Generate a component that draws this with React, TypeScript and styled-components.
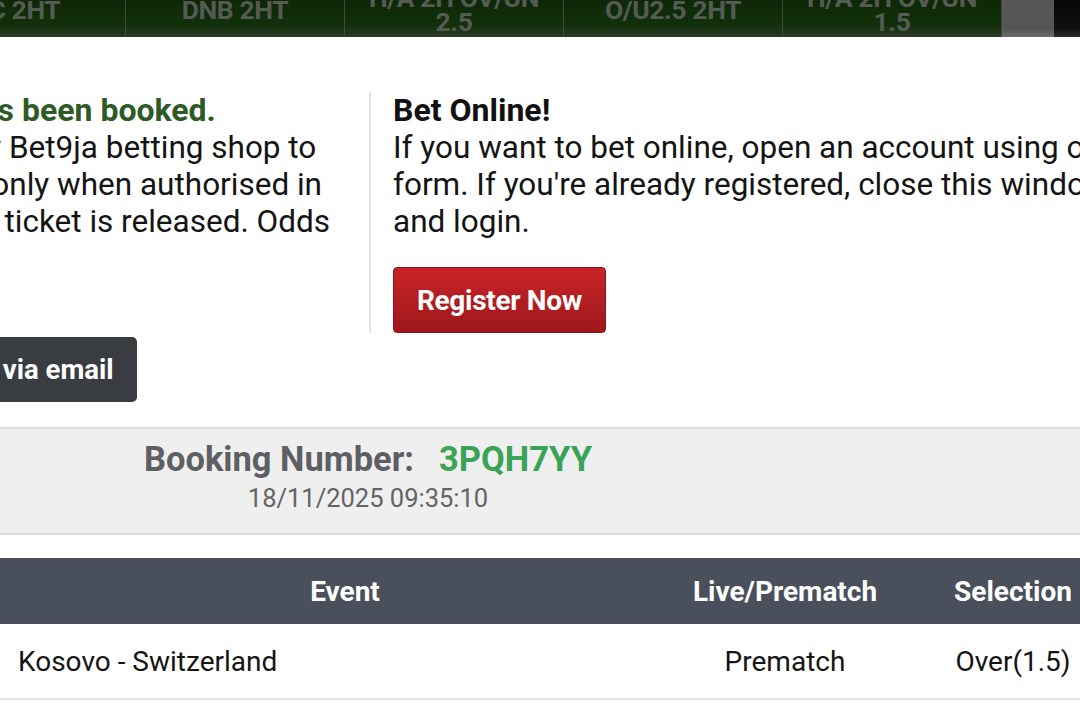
import React from 'react';
import styled, { createGlobalStyle } from 'styled-components';

const GlobalStyle = createGlobalStyle`
  html, body {
    margin: 0;
    padding: 0;
    background: #ffffff;
    font-family: Roboto, 'Liberation Sans', sans-serif;
  }
`;

const Page = styled.div`
  width: 1080px;
  height: 721px;
  overflow: hidden;
  background: #ffffff;
`;

const MarketBar = styled.div`
  display: flex;
  height: 54px;
  margin-top: -17px;
  margin-left: -93px;
`;

const MarketCell = styled.div`
  flex: 0 0 218px;
  display: flex;
  align-items: center;
  justify-content: center;
  text-align: center;
  border-right: 1px solid #3f4a3b;
  background: linear-gradient(#0b2205 0%, #11300a 78%, #2b3a27 100%);
  color: #555b52;
  font-weight: 700;
  font-size: 26.5px;
  line-height: 24px;
  letter-spacing: -0.4px;
`;

const MarketScroll = styled.div<{ $dark?: boolean }>`
  flex: 0 0 ${({ $dark }) => ($dark ? '40px' : '52px')};
  background: ${({ $dark }) =>
    $dark ? 'linear-gradient(#000000, #111111 85%, #2a2a2a)' : 'linear-gradient(#575757, #555555 85%, #6a6a6a)'};
`;

const Modal = styled.div`
  width: 1480px;
  margin-left: -372px;
`;

const Columns = styled.div`
  display: flex;
  align-items: flex-start;
  padding-top: 55px;
`;

const LeftColumn = styled.div`
  flex: 0 0 741px;
  display: flex;
  justify-content: flex-end;
  padding-right: 24px;
  box-sizing: border-box;
`;

const LeftText = styled.div`
  width: 511px;
  display: flex;
  flex-direction: column;
  align-items: flex-start;
`;

const RightColumn = styled.div`
  flex: 1;
  border-left: 2px solid #e2e2e2;
  padding-left: 22px;
`;

const Heading = styled.div<{ $green?: boolean }>`
  font-size: 32px;
  line-height: 37px;
  font-weight: 700;
  color: ${({ $green }) => ($green ? '#2e5a27' : '#111111')};
  white-space: nowrap;
`;

const Line = styled.div`
  font-size: 31.5px;
  line-height: 37px;
  color: #141414;
  white-space: nowrap;
`;

const RegisterButton = styled.button`
  margin-top: 27px;
  width: 213px;
  height: 66px;
  border: 1px solid #8c1417;
  border-radius: 4px;
  background: linear-gradient(#c92329, #b01d21 55%, #9f171b);
  color: #ffffff;
  font-family: Roboto, 'Liberation Sans', sans-serif;
  font-weight: 700;
  font-size: 28px;
  letter-spacing: -0.3px;
  cursor: pointer;
`;

const EmailButton = styled.button`
  margin-top: 97px;
  height: 65px;
  padding: 0 23px;
  border: none;
  border-radius: 5px;
  background: #393d42;
  color: #ffffff;
  font-family: Roboto, 'Liberation Sans', sans-serif;
  font-weight: 700;
  font-size: 27.5px;
  cursor: pointer;
`;

const BookingPanel = styled.div`
  margin-top: 25px;
  height: 108px;
  box-sizing: border-box;
  background: #efefef;
  border-top: 2px solid #dcdcdc;
  border-bottom: 2px solid #dcdcdc;
  display: flex;
  flex-direction: column;
  align-items: center;
  padding-top: 10px;
`;

const BookingRow = styled.div`
  display: flex;
  align-items: baseline;
  gap: 25px;
  font-size: 34.5px;
  line-height: 40px;
  font-weight: 700;
`;

const BookingLabel = styled.span`
  color: #5e5f63;
`;

const BookingCode = styled.span`
  color: #3aa356;
`;

const BookingDate = styled.div`
  margin-top: 4px;
  font-size: 25.5px;
  line-height: 30px;
  color: #646464;
`;

const Table = styled.div`
  margin-top: 23px;
  width: 1160px;
`;

const TableRow = styled.div<{ $head?: boolean }>`
  display: grid;
  grid-template-columns: 690px 190px 266px;
  align-items: center;
  height: ${({ $head }) => ($head ? '66px' : '74px')};
  background: ${({ $head }) => ($head ? '#4a505b' : '#ffffff')};
  border-bottom: ${({ $head }) => ($head ? 'none' : '2px solid #e2e2e2')};
  color: ${({ $head }) => ($head ? '#ffffff' : '#151515')};
  font-size: 28px;
  font-weight: ${({ $head }) => ($head ? 700 : 400)};
`;

const Cell = styled.div<{ $left?: boolean }>`
  text-align: ${({ $left }) => ($left ? 'left' : 'center')};
  padding-left: ${({ $left }) => ($left ? '18px' : '0')};
  white-space: nowrap;
`;

const markets = ['DC 2HT', 'DNB 2HT', 'H/A 2H OV/UN\n2.5', 'O/U2.5 2HT', 'H/A 2H OV/UN\n1.5'];

export default function App() {
  return (
    <Page>
      <GlobalStyle />
      <MarketBar>
        {markets.map((m) => (
          <MarketCell key={m}>
            <span>
              {m.split('\n').map((part, i) => (
                <React.Fragment key={part}>
                  {i > 0 && <br />}
                  {part}
                </React.Fragment>
              ))}
            </span>
          </MarketCell>
        ))}
        <MarketScroll />
        <MarketScroll $dark />
      </MarketBar>

      <Modal>
        <Columns>
          <LeftColumn>
            <LeftText>
              <Heading $green>Your bet has been booked.</Heading>
              <Line>Head to any Bet9ja betting shop to</Line>
              <Line>bet is valid only when authorised in</Line>
              <Line>shop as the ticket is released. Odds</Line>
              <EmailButton>Send ticket via email</EmailButton>
            </LeftText>
          </LeftColumn>
          <RightColumn>
            <Heading>Bet Online!</Heading>
            <Line>If you want to bet online, open an account using our</Line>
            <Line>form. If you're already registered, close this window</Line>
            <Line>and login.</Line>
            <RegisterButton>Register Now</RegisterButton>
          </RightColumn>
        </Columns>

        <BookingPanel>
          <BookingRow>
            <BookingLabel>Booking Number:</BookingLabel>
            <BookingCode>3PQH7YY</BookingCode>
          </BookingRow>
          <BookingDate>18/11/2025 09:35:10</BookingDate>
        </BookingPanel>
      </Modal>

      <Table>
        <TableRow $head>
          <Cell>Event</Cell>
          <Cell>Live/Prematch</Cell>
          <Cell>Selection</Cell>
        </TableRow>
        <TableRow>
          <Cell $left>Kosovo - Switzerland</Cell>
          <Cell>Prematch</Cell>
          <Cell>Over(1.5)</Cell>
        </TableRow>
      </Table>
    </Page>
  );
}
